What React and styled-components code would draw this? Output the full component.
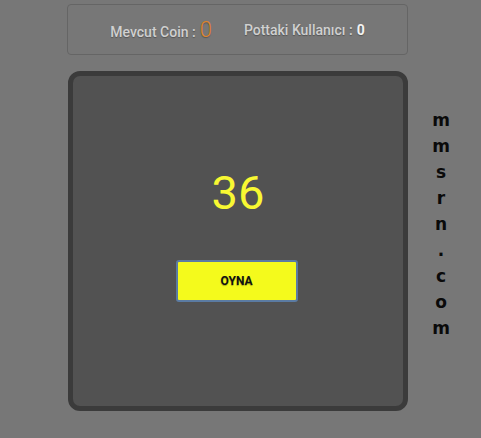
import React from "react";
import styled, { createGlobalStyle } from "styled-components";

const GlobalStyle = createGlobalStyle`
	html, body {
		margin: 0;
		padding: 0;
		background: #777777;
	}
	body {
		font-family: Roboto, "Liberation Sans", sans-serif;
	}
`;

const Page = styled.div`
	display: flex;
	flex-direction: column;
	padding: 4px 0 0 67px;
	min-height: 434px;
`;

const InfoBar = styled.div`
	display: flex;
	align-items: center;
	justify-content: center;
	gap: 32px;
	width: 339px;
	height: 49px;
	border: 1px solid #656565;
	border-radius: 4px;
	box-sizing: content-box;
`;

const InfoItem = styled.div`
	display: flex;
	align-items: baseline;
	gap: 4px;
	color: #d0d0d0;
	font-size: 14px;
	font-weight: 500;
	text-shadow: 0 1px 1px rgba(0, 0, 0, 0.3);
`;

const Value = styled.span`
	color: ${(p) => p.color || "#f2f2f2"};
	font-size: ${(p) => p.size || 14}px;
	font-weight: ${(p) => p.weight || 700};
`;

const Row = styled.div`
	display: flex;
	align-items: flex-start;
	margin-top: 16px;
	margin-left: 1px;
`;

const Panel = styled.div`
	display: flex;
	flex-direction: column;
	align-items: center;
	width: 340px;
	height: 340px;
	box-sizing: border-box;
	background: #525252;
	border: 5px solid #3b3b3b;
	border-radius: 12px;
	padding-top: 89px;
`;

const Counter = styled.div`
	color: #f8f832;
	font-size: 47px;
	line-height: 56px;
	font-weight: 400;
`;

const PlayButton = styled.button`
	margin: 39px 3px 0 0;
	width: 122px;
	height: 42px;
	background: #f4fa1c;
	border: 2px solid #5b7ba2;
	border-radius: 3px;
	font-family: Roboto, "Liberation Sans", sans-serif;
	font-size: 12px;
	font-weight: 700;
	color: #111111;
	text-shadow: 0 1px 1px rgba(0, 0, 0, 0.3);
	cursor: pointer;
`;

const SideText = styled.div`
	display: flex;
	flex-direction: column;
	align-items: center;
	margin-left: 23px;
	margin-top: 36px;
	width: 20px;
	font-family: "DejaVu Sans", Verdana, sans-serif;
	font-weight: 700;
	font-size: 17px;
	line-height: 26px;
	color: #0a0a0a;
`;

const Letter = styled.span`
	display: block;
`;

const App = () => {
	const site = "mmsrn.com".split("");
	return (
		<>
			<GlobalStyle />
			<Page>
				<InfoBar>
					<InfoItem>
						Mevcut Coin :
						<Value color="#e0852a" size={22} weight={300}>0</Value>
					</InfoItem>
					<InfoItem>
						Pottaki Kullanıcı :
						<Value>0</Value>
					</InfoItem>
				</InfoBar>
				<Row>
					<Panel>
						<Counter>36</Counter>
						<PlayButton>OYNA</PlayButton>
					</Panel>
					<SideText>
						{site.map((c, i) => (
							<Letter key={i}>{c}</Letter>
						))}
					</SideText>
				</Row>
			</Page>
		</>
	);
};

export default App;
